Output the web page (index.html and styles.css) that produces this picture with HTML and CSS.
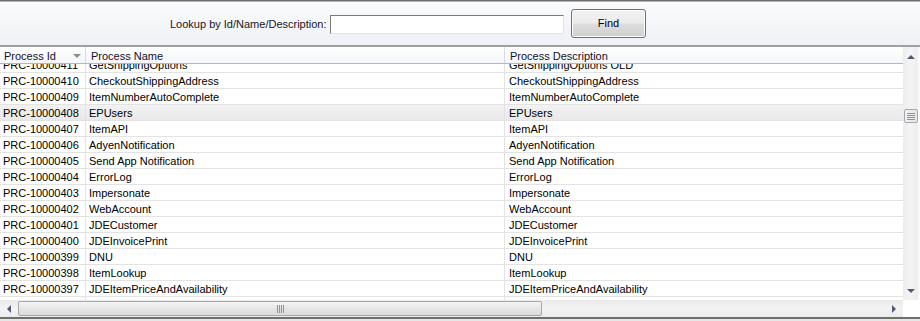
FILE: index.html
```html
<!DOCTYPE html>
<html>
<head>
<meta charset="utf-8">
<link rel="stylesheet" href="styles.css">
</head>
<body>
<div class="window">
  <div class="toolbar">
    <label class="lookup-label" for="q">Lookup by Id/Name/Description:</label>
    <input id="q" class="lookup-input" type="text">
    <button class="find-btn">Find</button>
  </div>
  <div class="grid-area">
    <div class="grid">
      <div class="table">
        <div class="hrow">
          <div class="hcell c-id">Process Id<span class="sort"></span></div>
          <div class="hcell c-name">Process Name</div>
          <div class="hcell c-desc">Process Description</div>
        </div>
        <div class="tbody">
          <div class="row first"><div class="cell c-id">PRC-10000411</div><div class="cell c-name">GetShippingOptions</div><div class="cell c-desc">GetShippingOptions OLD</div></div>
          <div class="row"><div class="cell c-id">PRC-10000410</div><div class="cell c-name">CheckoutShippingAddress</div><div class="cell c-desc">CheckoutShippingAddress</div></div>
          <div class="row"><div class="cell c-id">PRC-10000409</div><div class="cell c-name">ItemNumberAutoComplete</div><div class="cell c-desc">ItemNumberAutoComplete</div></div>
          <div class="row hot"><div class="cell c-id">PRC-10000408</div><div class="cell c-name">EPUsers</div><div class="cell c-desc">EPUsers</div></div>
          <div class="row"><div class="cell c-id">PRC-10000407</div><div class="cell c-name">ItemAPI</div><div class="cell c-desc">ItemAPI</div></div>
          <div class="row"><div class="cell c-id">PRC-10000406</div><div class="cell c-name">AdyenNotification</div><div class="cell c-desc">AdyenNotification</div></div>
          <div class="row"><div class="cell c-id">PRC-10000405</div><div class="cell c-name">Send App Notification</div><div class="cell c-desc">Send App Notification</div></div>
          <div class="row"><div class="cell c-id">PRC-10000404</div><div class="cell c-name">ErrorLog</div><div class="cell c-desc">ErrorLog</div></div>
          <div class="row"><div class="cell c-id">PRC-10000403</div><div class="cell c-name">Impersonate</div><div class="cell c-desc">Impersonate</div></div>
          <div class="row"><div class="cell c-id">PRC-10000402</div><div class="cell c-name">WebAccount</div><div class="cell c-desc">WebAccount</div></div>
          <div class="row"><div class="cell c-id">PRC-10000401</div><div class="cell c-name">JDECustomer</div><div class="cell c-desc">JDECustomer</div></div>
          <div class="row"><div class="cell c-id">PRC-10000400</div><div class="cell c-name">JDEInvoicePrint</div><div class="cell c-desc">JDEInvoicePrint</div></div>
          <div class="row"><div class="cell c-id">PRC-10000399</div><div class="cell c-name">DNU</div><div class="cell c-desc">DNU</div></div>
          <div class="row"><div class="cell c-id">PRC-10000398</div><div class="cell c-name">ItemLookup</div><div class="cell c-desc">ItemLookup</div></div>
          <div class="row"><div class="cell c-id">PRC-10000397</div><div class="cell c-name">JDEItemPriceAndAvailability</div><div class="cell c-desc">JDEItemPriceAndAvailability</div></div>
          <div class="row"><div class="cell c-id"></div><div class="cell c-name"></div><div class="cell c-desc"></div></div>
        </div>
      </div>
      <div class="vscroll">
        <div class="arrow up"></div>
        <div class="vtrack">
          <div class="vthumb"><span></span><span></span><span></span><span></span></div>
        </div>
        <div class="arrow down"></div>
      </div>
    </div>
    <div class="hscroll-row">
      <div class="hscroll">
        <div class="arrow left"></div>
        <div class="htrack">
          <div class="hthumb"><span></span><span></span><span></span><span></span></div>
        </div>
        <div class="arrow right"></div>
      </div>
      <div class="corner"></div>
    </div>
  </div>
</div>
</body>
</html>
```

FILE: styles.css
```css
html, body {
  margin: 0;
  padding: 0;
  background: #ffffff;
}
body {
  width: 920px;
  height: 321px;
  overflow: hidden;
  font-family: "Liberation Sans", Arial, sans-serif;
  font-size: 11px;
  color: #000;
}
.window {
  width: 920px;
  height: 321px;
  display: flex;
  flex-direction: column;
  box-sizing: border-box;
  border-top: 1px solid #6e6e6e;
}
.toolbar {
  flex: none;
  height: 44px;
  box-sizing: border-box;
  border-top: 1px solid #b4b4b4;
  background: linear-gradient(#fafbfc, #eef1f5);
  display: flex;
  align-items: center;
  padding-left: 170px;
}
.lookup-label {
  color: #1c1424;
  margin-right: 4px;
  width: 156px;
  white-space: nowrap;
}
.lookup-input {
  width: 234px;
  height: 19px;
  box-sizing: border-box;
  margin: 2px 0 0 0;
  padding: 0;
  border: 1px solid;
  border-color: #7a7a7a #e3e3e3 #e3e3e3 #7a7a7a;
  background: #fff;
  outline: none;
}
.find-btn {
  margin-left: 7px;
  margin-bottom: 1px;
  width: 75px;
  height: 29px;
  box-sizing: border-box;
  border: 1px solid #707070;
  border-radius: 3px;
  background: linear-gradient(#f2f2f2 0%, #ebebeb 48%, #dddddd 52%, #cfcfcf 100%);
  font-family: "Liberation Sans", Arial, sans-serif;
  font-size: 11px;
  color: #000;
  padding: 0;
  box-shadow: inset 0 0 0 1px #fcfcfc;
}
.grid-area {
  flex: 1;
  min-height: 0;
  display: flex;
  flex-direction: column;
  border-top: 2px solid #a0a0a0;
  border-bottom: 2px solid #6f6f6f;
  box-shadow: 0 2px 0 #e6e6e6;
  margin-bottom: 2px;
}
.grid {
  flex: 1;
  display: flex;
  min-height: 0;
}
.table {
  flex: 1;
  display: flex;
  flex-direction: column;
  overflow: hidden;
  min-height: 0;
}
.hrow {
  display: flex;
  height: 17px;
  box-sizing: border-box;
  border-bottom: 1px solid #a3bad6;
  background: linear-gradient(#ffffff, #f4f6f9);
  position: relative;
  z-index: 1;
  flex: none;
}
.hcell {
  box-sizing: border-box;
  border-right: 1px solid #d5dae3;
  line-height: 14px;
  padding-top: 2px;
  padding-left: 5px;
  white-space: nowrap;
  color: #14102a;
  position: relative;
}
.hcell.c-id { padding-left: 4px; }
.sort {
  position: absolute;
  right: 4px;
  top: 7px;
  width: 0;
  height: 0;
  border-left: 4px solid transparent;
  border-right: 4px solid transparent;
  border-top: 4px solid #8c8c8c;
}
.c-id { width: 86px; flex: none; }
.c-name { width: 419px; flex: none; }
.c-desc { flex: 1; border-right: none; }
.tbody {
  flex: 1;
  min-height: 0;
  overflow: hidden;
}
.row {
  display: flex;
  height: 16px;
  box-sizing: border-box;
  border-bottom: 1px solid #e3e3e3;
}
.row.first { margin-top: -7px; }
.row.hot {
  background: linear-gradient(#f2f2f2, #e9e9e9);
}
.cell {
  box-sizing: border-box;
  border-right: 1px solid #e3e3e3;
  line-height: 13px;
  padding-top: 2px;
  padding-left: 3px;
  white-space: nowrap;
  overflow: hidden;
}
.cell.c-desc { padding-left: 4px; border-right: none; }
.vscroll {
  width: 17px;
  flex: none;
  box-sizing: border-box;
  border-right: 2px solid #fafafa;
  background: linear-gradient(90deg, #ececec, #f4f4f4 50%, #ededed);
  display: flex;
  flex-direction: column;
  align-items: center;
}
.arrow {
  width: 0;
  height: 0;
  flex: none;
}
.arrow.up {
  margin-top: 8px;
  border-left: 4px solid transparent;
  border-right: 4px solid transparent;
  border-bottom: 4px solid #4d5a78;
}
.arrow.down {
  margin-bottom: 7px;
  border-left: 4px solid transparent;
  border-right: 4px solid transparent;
  border-top: 4px solid #4d5a78;
}
.vtrack {
  flex: 1;
  width: 100%;
  display: flex;
  flex-direction: column;
  align-items: center;
}
.vthumb {
  margin-top: 50px;
  width: 14px;
  height: 14px;
  box-sizing: border-box;
  border: 1px solid #a2a7b0;
  border-radius: 2px;
  background: linear-gradient(90deg, #f3f3f3, #e4e4e4);
  display: flex;
  flex-direction: column;
  justify-content: center;
  gap: 1px;
  padding: 0 2px;
}
.vthumb span {
  display: block;
  height: 1px;
  background: #8d939c;
}
.hscroll-row {
  display: flex;
  height: 17px;
  flex: none;
}
.hscroll {
  flex: 1;
  display: flex;
  align-items: center;
  background: linear-gradient(#e9e9e9, #f3f3f3 50%, #ececec);
}
.corner {
  width: 17px;
  background: #ffffff;
}
.arrow.left {
  margin-left: 7px;
  border-top: 4px solid transparent;
  border-bottom: 4px solid transparent;
  border-right: 4px solid #4d5a78;
}
.arrow.right {
  margin-right: 7px;
  border-top: 4px solid transparent;
  border-bottom: 4px solid transparent;
  border-left: 4px solid #4d5a78;
}
.htrack {
  flex: 1;
  height: 17px;
  display: flex;
  align-items: center;
  padding-left: 7px;
}
.hthumb {
  width: 524px;
  height: 15px;
  box-sizing: border-box;
  border: 1px solid #a3a8b0;
  border-radius: 2px;
  background: linear-gradient(#f4f4f4, #e6e6e6 50%, #dcdcdc);
  display: flex;
  justify-content: center;
  align-items: center;
  gap: 1px;
}
.hthumb span {
  display: block;
  width: 1px;
  height: 8px;
  background: #8d939c;
}
```
